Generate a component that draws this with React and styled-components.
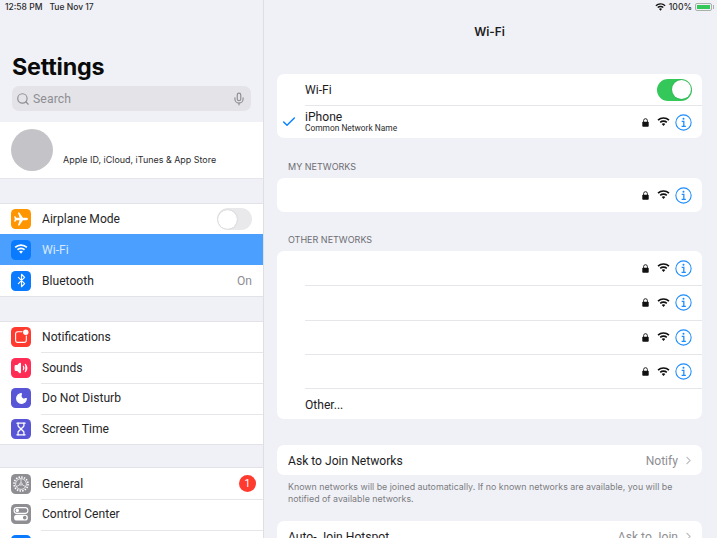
import React from 'react'
import styled, { createGlobalStyle } from 'styled-components'
import { Search, Mic, Bluetooth, Volume2, Moon, Hourglass, Check, ChevronRight } from 'lucide-react'

const GlobalStyle = createGlobalStyle`
  html, body { margin: 0; padding: 0; height: 100%; overflow: hidden; background: #f0f1f6; }
  body { font-family: Inter, "Liberation Sans", sans-serif; -webkit-font-smoothing: antialiased; }
  * { box-sizing: border-box; }
`

const bodyFont = 'Roboto, "Liberation Sans", sans-serif'

const Screen = styled.div`
  width: 717px;
  height: 538px;
  display: flex;
  overflow: hidden;
  background: #f0f1f6;
  color: #1c1c1e;
`

/* ---------- left column ---------- */
const Sidebar = styled.aside`
  width: 264px;
  flex: none;
  height: 538px;
  overflow: hidden;
  border-right: 1px solid #dfdfe3;
`
const StatusLeft = styled.div`
  height: 14px;
  display: flex;
  gap: 7px;
  padding-left: 5px;
  align-items: center;
  font-size: 8.5px;
  font-weight: 500;
  color: #2a2a2c;
`
const LargeTitle = styled.h1`
  margin: 38px 0 0 12px;
  height: 30px;
  line-height: 30px;
  font-size: 23.3px;
  font-weight: 700;
  letter-spacing: -0.2px;
  color: #0a0a0a;
`
const SearchBar = styled.div`
  margin: 4px 12px 0 12px;
  height: 25px;
  border-radius: 7px;
  background: #e3e3e8;
  display: flex;
  align-items: center;
  padding: 0 5px 0 4px;
  gap: 3px;
  color: #8e8e93;
  font-family: ${bodyFont};
  font-size: 12.2px;
  letter-spacing: 0.1px;
  span { flex: 1; }
`
const Profile = styled.div`
  margin-top: 11px;
  height: 57px;
  background: #fff;
  border-bottom: 1px solid #e6e6ea;
  display: flex;
  align-items: center;
  padding-left: 11px;
`
const Avatar = styled.div`
  width: 42px;
  height: 42px;
  border-radius: 50%;
  background: #c4c4c8;
`
const ProfileText = styled.div`
  margin: 18px 0 0 10px;
  font-size: 8.95px;
  color: #2c2c2e;
`
const MenuGroup = styled.div`
  margin-top: ${p => p.$gap}px;
  background: #fff;
  border-top: 1px solid #e3e3e7;
  border-bottom: 1px solid #e3e3e7;
`
const MenuRow = styled.div`
  position: relative;
  height: ${p => p.$h || 30.7}px;
  padding: 0 11px;
  display: flex;
  align-items: center;
  font-family: ${bodyFont};
  font-size: 12.1px;
  background: ${p => (p.$active ? '#4a9fff' : '#fff')};
  color: ${p => (p.$active ? '#d9eaff' : '#262628')};
  & + &::before {
    content: '';
    position: absolute;
    left: 41px;
    right: 0;
    top: 0;
    border-top: 1px solid #e6e6ea;
    display: ${p => (p.$active || p.$noLine ? 'none' : 'block')};
  }
`
const IconTile = styled.div`
  position: relative;
  width: 20px;
  height: 20px;
  border-radius: 4.5px;
  flex: none;
  background: ${p => p.$bg};
  color: #fff;
  display: flex;
  align-items: center;
  justify-content: center;
  margin-right: 11px;
`
const RowLabel = styled.span`
  flex: 1;
`
const RowValue = styled.span`
  color: #8e8e93;
`
const Badge = styled.div`
  width: 17px;
  height: 17px;
  margin-right: -4px;
  border-radius: 50%;
  background: #ff3b30;
  color: #fff;
  font-size: 10.5px;
  display: flex;
  align-items: center;
  justify-content: center;
`
const Toggle = styled.div`
  position: relative;
  width: 35px;
  height: 22px;
  border-radius: 11px;
  background: ${p => (p.$on ? '#34c759' : '#e9e9eb')};
  flex: none;
  &::after {
    content: '';
    position: absolute;
    top: 1.5px;
    ${p => (p.$on ? 'right: 1.5px;' : 'left: 1px;')}
    width: 19px;
    height: 19px;
    border-radius: 50%;
    background: #fff;
    box-shadow: 0 0 1.5px rgba(0, 0, 0, 0.22);
  }
`

/* ---------- right column ---------- */
const Detail = styled.main`
  flex: 1;
  height: 538px;
  overflow: hidden;
  padding: 0 15px 0 13px;
`
const StatusRight = styled.div`
  height: 14px;
  display: flex;
  justify-content: flex-end;
  align-items: center;
  gap: 3px;
  margin-right: -12px;
  font-size: 8.6px;
  font-weight: 500;
  color: #2a2a2c;
`
const Battery = styled.div`
  position: relative;
  width: 17px;
  height: 8px;
  margin-right: 2px;
  border: 1px solid #a9b0a9;
  border-radius: 2px;
  padding: 1px;
  background: linear-gradient(#34c759, #34c759) content-box;
  &::after {
    content: '';
    position: absolute;
    right: -3px;
    top: 1px;
    width: 1.5px;
    height: 4px;
    background: #a9b0a9;
  }
`
const NavTitle = styled.div`
  margin-top: 11px;
  height: 14px;
  line-height: 14px;
  text-align: center;
  font-size: 11.8px;
  font-weight: 600;
  color: #1c1c1e;
`
const Card = styled.section`
  margin-top: ${p => p.$gap || 0}px;
  background: #fff;
  border-radius: 7px;
  overflow: hidden;
`
const WifiRow = styled.div`
  height: ${p => p.$h}px;
  display: flex;
  align-items: center;
  padding-right: 10px;
  margin-left: 28px;
  border-top: ${p => (p.$line ? '1px solid #e6e6ea' : 'none')};
  font-family: ${bodyFont};
  font-size: 12.1px;
  position: relative;
`
const CheckMark = styled.div`
  position: absolute;
  left: -24px;
  top: 8px;
  color: #0a84ff;
  display: flex;
`
const NetName = styled.div`
  flex: 1;
  line-height: 12px;
  padding-top: ${p => p.$pad || 0}px;
  small {
    display: block;
    font-size: 8.4px;
    line-height: 11px;
    color: #2c2c2e;
  }
`
const IconSet = styled.div`
  display: flex;
  align-items: center;
  gap: 7px;
  svg:last-child { margin-left: -2px; }
  svg:first-child { margin-right: 1px; }
`
const SectionHead = styled.div`
  margin: ${p => p.$gap}px 0 0 11px;
  height: 12px;
  line-height: 12px;
  font-size: 9px;
  color: #6d6d72;
`
const PlainRow = styled.div`
  height: 30px;
  display: flex;
  align-items: center;
  padding: 1px 7px 0 11px;
  font-family: ${bodyFont};
  font-size: 12.1px;
  gap: 4px;
  color: #1c1c1e;
`
const FootNote = styled.p`
  margin: 6px 11px 0 11px;
  font-size: 8.85px;
  line-height: 11.5px;
  color: #7c7c82;
`

const WifiGlyph = ({ size = 13, color = 'currentColor' }) => (
  <svg width={size} height={size * 0.75} viewBox="0 0 16 12" fill={color}>
    <path d="M8 2.2c2.3 0 4.4.9 6 2.4l1.4-1.5A10.6 10.6 0 0 0 8 .2 10.6 10.6 0 0 0 .6 3.1L2 4.6a8.7 8.7 0 0 1 6-2.4z" />
    <path d="M8 6c1.3 0 2.5.5 3.4 1.3l1.3-1.5A7 7 0 0 0 8 4a7 7 0 0 0-4.7 1.8l1.3 1.5C5.5 6.5 6.7 6 8 6z" />
    <path d="M8 7.8c-.9 0-1.6.3-2.2.8L8 11.2l2.2-2.6c-.6-.5-1.3-.8-2.2-.8z" />
  </svg>
)

const LockGlyph = () => (
  <svg width="7" height="9" viewBox="0 0 7 9">
    <path d="M1.6 4V2.6a1.9 1.9 0 0 1 3.8 0V4" fill="none" stroke="#111" strokeWidth="0.9" />
    <rect x="0.3" y="3.8" width="6.4" height="5" rx="0.8" fill="#111" />
  </svg>
)

const InfoIcon = () => (
  <svg width="17" height="17" viewBox="0 0 16 16" fill="none" stroke="#1c8cff">
    <circle cx="8" cy="8" r="7.2" strokeWidth="1" />
    <circle cx="8" cy="4.4" r="0.95" fill="#1c8cff" stroke="none" />
    <path d="M6.3 6.9H8.3V11.6M6.2 11.6H10.2" strokeWidth="1.2" />
  </svg>
)

const NetIcons = () => (
  <IconSet>
    <LockGlyph />
    <WifiGlyph color="#111" />
    <InfoIcon />
  </IconSet>
)

const PlaneGlyph = () => (
  <svg width="16" height="16" viewBox="0 0 16 16" fill="#fff">
    <path d="M15 8c0-.7-.8-1.2-1.8-1.2H9.9L6.3 1.5H4.9l1.7 5.3H3.4L2.2 5.2H1.1L1.8 8l-.7 2.8h1.1l1.2-1.6h3.2l-1.7 5.3h1.4l3.6-5.3h3.3C14.2 9.2 15 8.7 15 8z" />
  </svg>
)

const GearGlyph = () => (
  <svg width="18" height="18" viewBox="0 0 18 18" fill="none" stroke="#fff">
    <circle cx="9" cy="9" r="7" strokeWidth="1.6" strokeDasharray="1.5 1.25" />
    <circle cx="9" cy="9" r="5.4" strokeWidth="0.8" />
    <circle cx="9" cy="9" r="1.2" strokeWidth="0.7" />
    <path d="M9 7.8V3.8M8 9.6 4.4 11.7M10 9.6l3.6 2.1" strokeWidth="0.7" />
  </svg>
)

const ControlGlyph = () => (
  <svg width="16" height="16" viewBox="0 0 15 15">
    <rect x="1" y="1.5" width="13" height="5.4" rx="2.7" fill="none" stroke="#fff" strokeWidth="1" />
    <circle cx="4" cy="4.2" r="1.6" fill="#fff" />
    <rect x="1" y="8.2" width="13" height="5.4" rx="2.7" fill="#fff" />
    <circle cx="11" cy="10.9" r="1.7" fill="#8e8e93" />
  </svg>
)

const NotifGlyph = () => (
  <svg width="15" height="15" viewBox="0 0 14 14" fill="none">
    <rect x="1.5" y="2.5" width="10" height="10" rx="2" stroke="#fff" strokeWidth="1" />
    <circle cx="11" cy="3" r="3.2" fill="#ff3b30" />
    <circle cx="11" cy="3" r="2.5" fill="#fff" />
  </svg>
)

const App = () => {
  const others = [1, 2, 3, 4]
  return (
    <Screen>
      <GlobalStyle />
      <Sidebar>
        <StatusLeft><span>12:58 PM</span><span>Tue Nov 17</span></StatusLeft>
        <LargeTitle>Settings</LargeTitle>
        <SearchBar>
          <Search size={14} />
          <span>Search</span>
          <Mic size={14} />
        </SearchBar>
        <Profile>
          <Avatar />
          <ProfileText>Apple ID, iCloud, iTunes &amp; App Store</ProfileText>
        </Profile>
        <MenuGroup $gap={24}>
          <MenuRow $h={30}>
            <IconTile $bg="#ff9500"><PlaneGlyph /></IconTile>
            <RowLabel>Airplane Mode</RowLabel>
            <Toggle />
          </MenuRow>
          <MenuRow $active $h={31}>
            <IconTile $bg="#0a7aff"><WifiGlyph size={14} /></IconTile>
            <RowLabel>Wi-Fi</RowLabel>
          </MenuRow>
          <MenuRow $h={31} $noLine>
            <IconTile $bg="#0a7aff"><Bluetooth size={15} strokeWidth={1.8} /></IconTile>
            <RowLabel>Bluetooth</RowLabel>
            <RowValue>On</RowValue>
          </MenuRow>
        </MenuGroup>
        <MenuGroup $gap={23.5}>
          <MenuRow>
            <IconTile $bg="#ff3b30"><NotifGlyph /></IconTile>
            <RowLabel>Notifications</RowLabel>
          </MenuRow>
          <MenuRow>
            <IconTile $bg="#ff2d55"><Volume2 size={14} fill="#fff" /></IconTile>
            <RowLabel>Sounds</RowLabel>
          </MenuRow>
          <MenuRow>
            <IconTile $bg="#5856d6"><Moon size={13} fill="#fff" /></IconTile>
            <RowLabel>Do Not Disturb</RowLabel>
          </MenuRow>
          <MenuRow>
            <IconTile $bg="#5856d6"><Hourglass size={14} strokeWidth={2.2} /></IconTile>
            <RowLabel>Screen Time</RowLabel>
          </MenuRow>
        </MenuGroup>
        <MenuGroup $gap={22}>
          <MenuRow>
            <IconTile $bg="#8e8e93"><GearGlyph /></IconTile>
            <RowLabel>General</RowLabel>
            <Badge>1</Badge>
          </MenuRow>
          <MenuRow>
            <IconTile $bg="#8e8e93"><ControlGlyph /></IconTile>
            <RowLabel>Control Center</RowLabel>
          </MenuRow>
          <MenuRow>
            <IconTile $bg="#0a7aff" />
          </MenuRow>
        </MenuGroup>
      </Sidebar>

      <Detail>
        <StatusRight>
          <WifiGlyph size={11} color="#111" />
          <span>100%</span>
          <Battery />
        </StatusRight>
        <NavTitle>Wi-Fi</NavTitle>
        <Card $gap={35}>
          <WifiRow $h={31}>
            <NetName>Wi-Fi</NetName>
            <Toggle $on />
          </WifiRow>
          <WifiRow $h={33} $line>
            <CheckMark><Check size={16} strokeWidth={2.2} /></CheckMark>
            <NetName>iPhone<small>Common Network Name</small></NetName>
            <NetIcons />
          </WifiRow>
        </Card>
        <SectionHead $gap={23}>MY NETWORKS</SectionHead>
        <Card $gap={5}>
          <WifiRow $h={34}>
            <NetName />
            <NetIcons />
          </WifiRow>
        </Card>
        <SectionHead $gap={22}>OTHER NETWORKS</SectionHead>
        <Card $gap={5}>
          {others.map(n => (
            <WifiRow key={n} $h={34.3} $line={n > 1}>
              <NetName />
              <NetIcons />
            </WifiRow>
          ))}
          <WifiRow $h={31} $line>
            <NetName $pad={2}>Other...</NetName>
          </WifiRow>
        </Card>
        <Card $gap={26}>
          <PlainRow>
            <RowLabel>Ask to Join Networks</RowLabel>
            <RowValue>Notify</RowValue>
            <ChevronRight size={13} color="#c0c0c4" />
          </PlainRow>
        </Card>
        <FootNote>Known networks will be joined automatically. If no known networks are available, you will be notified of available networks.</FootNote>
        <Card $gap={17}>
          <PlainRow>
            <RowLabel>Auto- Join Hotspot</RowLabel>
            <RowValue>Ask to Join</RowValue>
            <ChevronRight size={13} color="#c0c0c4" />
          </PlainRow>
        </Card>
      </Detail>
    </Screen>
  )
}

export default App
